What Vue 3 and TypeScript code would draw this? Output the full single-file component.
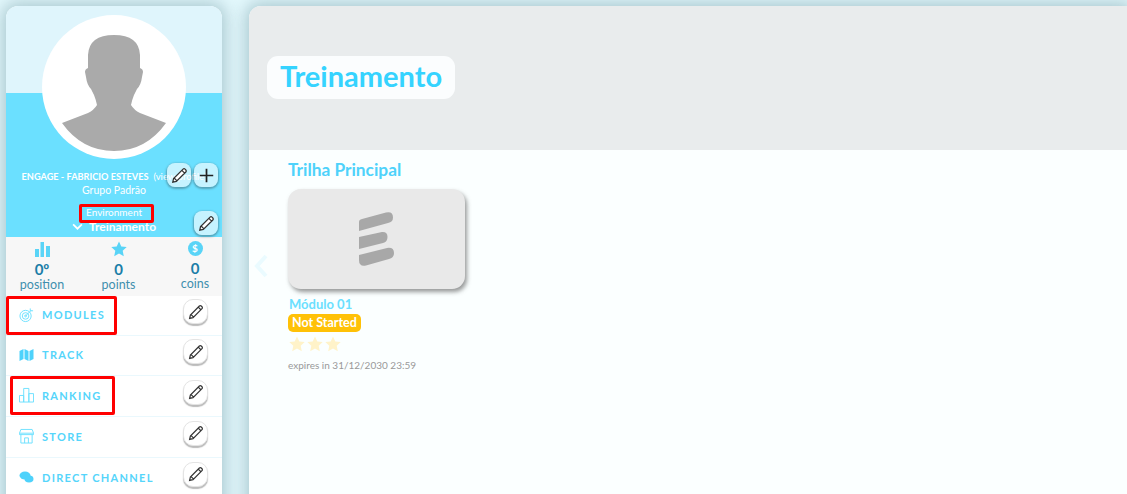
<script setup lang="ts">
const stats = [
  { value: '0º', label: 'position', icon: 'bars' },
  { value: '0', label: 'points', icon: 'star' },
  { value: '0', label: 'coins', icon: 'coin' },
];

const menu = [
  { label: 'MODULES', icon: 'target', height: 40 },
  { label: 'TRACK', icon: 'map', height: 40 },
  { label: 'RANKING', icon: 'rank', height: 41 },
  { label: 'STORE', icon: 'store', height: 41 },
  { label: 'DIRECT CHANNEL', icon: 'chat', height: 41 },
];

const pencil = 'M3.500 20.500l1-4.500L16.500 4c.7-.7 1.800-.7 2.500 0l1 1c.7.7.7 1.800 0 2.500L8 19.500l-4.500 1zM5.500 15.500l3 3M15 5.500l3.500 3.500';
</script>

<template>
  <div class="page">
    <aside class="sidebar">
      <section class="hero">
        <div class="avatar">
          <svg viewBox="0 0 144 144" width="144" height="144">
            <path class="silhouette" d="M20 108L46 98Q52 95 55 90Q54 85 52 80L49 74Q45 70 44 62L43 57Q43 54 46 53L46 40Q47 20 72 20Q97 20 98 40L98 53Q101 54 101 57L100 62Q99 70 95 74L92 80Q90 85 89 90Q92 95 98 98L124 108Q104 136 72 136Q40 136 20 108z" />
          </svg>
        </div>
        <p class="name"><b>ENGAGE - FABRICIO ESTEVES</b>&nbsp; (view profile)</p>
        <p class="group">Grupo Padrão</p>
        <div class="env">
          <span class="env-label">Environment</span>
          <span class="env-value">
            <svg viewBox="0 0 12 8" width="11" height="7"><path d="M1 1.500l5 5 5-5" /></svg>
            Treinamento
          </span>
        </div>

        <div class="hero-actions">
          <button class="hero-btn">
            <svg viewBox="0 0 24 24" width="19" height="19"><path class="pencil" :d="pencil" /></svg>
          </button>
          <button class="hero-btn">
            <svg viewBox="0 0 24 24" width="19" height="19"><path class="plus" d="M12 3.500v17M3.500 12h17" /></svg>
          </button>
        </div>
        <button class="hero-btn env-edit">
          <svg viewBox="0 0 24 24" width="19" height="19"><path class="pencil" :d="pencil" /></svg>
        </button>
      </section>

      <section class="stats">
        <div v-for="s in stats" :key="s.label" class="stat">
          <svg v-if="s.icon === 'bars'" viewBox="0 0 16 16" width="16" height="16">
            <path class="fill" d="M1 8h4v8H1zM6.500 1h3.500v15H6.500zM12 5h4v11h-4z" />
          </svg>
          <svg v-else-if="s.icon === 'star'" viewBox="0 0 16 16" width="16" height="16">
            <path class="fill" d="M8 .5l2.300 5 5.400.6-4 3.700 1.100 5.400L8 12.500l-4.800 2.700 1.100-5.400-4-3.700 5.400-.6z" />
          </svg>
          <span v-else class="coin">$</span>
          <strong>{{ s.value }}</strong>
          <span class="stat-label">{{ s.label }}</span>
        </div>
      </section>

      <nav class="menu">
        <div
          v-for="item in menu"
          :key="item.label"
          class="menu-row"
          :style="{ height: item.height + 'px' }"
        >
          <span class="menu-link">
            <svg v-if="item.icon === 'target'" viewBox="0 0 16 16" width="16" height="16" class="line">
              <circle cx="7" cy="9" r="6" /><circle cx="7" cy="9" r="3.500" /><circle cx="7" cy="9" r="1" />
              <path d="M7 9l6-6M12 1v2.500h3" />
            </svg>
            <svg v-else-if="item.icon === 'map'" viewBox="0 0 14 12" width="14" height="12">
              <path class="fill" d="M0 2l4-2v10l-4 2zM5 0l4 2v10l-4-2zM10 2l4-2v10l-4 2z" />
            </svg>
            <svg v-else-if="item.icon === 'rank'" viewBox="0 0 16 16" width="16" height="16" class="line">
              <path d="M.5 15.500v-7h4.500v7M5 15.500V1h5.500v14.500M10.500 15.500v-9h5v9" />
              <path d="M.500 15.500h15" />
            </svg>
            <svg v-else-if="item.icon === 'store'" viewBox="0 0 16 16" width="16" height="16" class="line">
              <path d="M2 1h12l1.500 4h-15zM.5 5v1.500h15V5M2 6.500v9h12v-9M6 15.500V10h4v5.500" />
            </svg>
            <svg v-else viewBox="0 0 14 12" width="14" height="12">
              <ellipse class="fill" cx="5.500" cy="4.500" rx="5.500" ry="4" />
              <ellipse class="fill" cx="9.500" cy="8" rx="4.500" ry="3.400" />
            </svg>
            <span class="menu-text">{{ item.label }}</span>
          </span>
          <button class="row-btn">
            <svg viewBox="0 0 24 24" width="18" height="18"><path class="pencil" :d="pencil" /></svg>
          </button>
        </div>
      </nav>

      <span class="mark mark-env"></span>
      <span class="mark mark-modules"></span>
      <span class="mark mark-ranking"></span>
    </aside>

    <main class="content">
      <header class="banner">
        <h1>Treinamento</h1>
      </header>

      <section class="track">
        <svg class="prev" viewBox="0 0 14 24" width="14" height="24"><path d="M12 2L3 12l9 10" /></svg>
        <h2>Trilha Principal</h2>
        <article class="module">
          <div class="thumb">
            <svg viewBox="0 0 35 55" width="35" height="55">
              <path class="logo" d="M0 10Q0 7.500 3 7L27 .5Q34 -1 34 5.500Q34 10 29 11L0 19zM0 25L23 20Q28.500 19.500 28.500 25Q28.500 30 24 31L0 37zM0 43L28 36Q35 35 35 41Q35 46 30 47L7 53.500Q0 55 0 48z" />
            </svg>
          </div>
          <h3>Módulo 01</h3>
          <span class="status">Not Started</span>
          <div class="stars">
            <svg v-for="n in 3" :key="n" viewBox="0 0 16 16" width="16" height="16">
              <path d="M8 .5l2.300 5 5.400.6-4 3.700 1.100 5.400L8 12.500l-4.800 2.700 1.100-5.400-4-3.700 5.400-.6z" />
            </svg>
          </div>
          <p class="expires">expires in 31/12/2030 23:59</p>
        </article>
      </section>
    </main>
  </div>
</template>

<style scoped>
.page {
  display: flex;
  gap: 27px;
  height: 494px;
  padding: 6px 0 0 6px;
  box-sizing: border-box;
  overflow: hidden;
  background: #e3f8fc;
  font-family: Lato, "Open Sans", sans-serif;
}

.sidebar {
  position: relative;
  flex: 0 0 216px;
  height: 560px;
  border-radius: 12px 12px 0 0;
  background: #fff;
  box-shadow: 0 0 16px 4px rgba(60, 110, 125, 0.32);
}

.hero {
  position: relative;
  height: 231px;
  padding-top: 9px;
  box-sizing: border-box;
  border-radius: 12px 12px 0 0;
  background: linear-gradient(#dff5fc 87px, #6be0ff 87px);
  color: #fff;
  text-align: center;
}

.avatar {
  width: 144px;
  height: 144px;
  margin: 0 auto;
  border-radius: 50%;
  background: #fff;
}

.avatar svg {
  display: block;
}

.silhouette {
  fill: #aaaaaa;
}

.name {
  margin: 11px 0 0;
  font-size: 9.500px;
  line-height: 13px;
  white-space: nowrap;
}

.name b {
  font-size: 9.200px;
  font-weight: 700;
}

.group {
  margin: 1px 0 0;
  font-size: 10.500px;
  line-height: 13px;
}

.env {
  display: flex;
  flex-direction: column;
  align-items: center;
  margin-top: 9px;
}

.env-label {
  font-size: 10px;
  line-height: 13px;
}

.env-value {
  display: flex;
  align-items: center;
  gap: 6px;
  font-size: 12px;
  font-weight: 700;
  line-height: 15px;
}

.env-value svg path {
  fill: none;
  stroke: #fff;
  stroke-width: 2;
}

.hero-actions {
  position: absolute;
  top: 157px;
  right: 4px;
  display: flex;
  gap: 3px;
}

.hero-btn {
  display: flex;
  align-items: center;
  justify-content: center;
  width: 24px;
  height: 24px;
  padding: 0;
  border: 0;
  border-radius: 8px;
  background: rgba(255, 255, 255, 0.62);
  box-shadow: 0 1px 2px 1px rgba(60, 90, 100, 0.45);
}

.env-edit {
  position: absolute;
  top: 205px;
  right: 4px;
}

.pencil {
  fill: #fff;
  stroke: #333;
  stroke-width: 1.600;
}

.plus {
  fill: none;
  stroke: #222;
  stroke-width: 2.200;
}

.stats {
  display: flex;
  justify-content: space-between;
  height: 59px;
  padding: 0 2px 0 11px;
  box-sizing: border-box;
  background: #f7f7f7;
}

.stat {
  flex: 0 0 50px;
  display: flex;
  flex-direction: column;
  align-items: center;
  padding-top: 4px;
  box-sizing: border-box;
  color: #1b7ea8;
}

.stat svg {
  display: block;
  height: 16px;
}

.stat .fill {
  fill: #59d4f7;
}

.coin {
  width: 15px;
  height: 15px;
  border-radius: 50%;
  background: #59d4f7;
  color: #fff;
  font-size: 10px;
  font-weight: 700;
  line-height: 15px;
  text-align: center;
}

.stat strong {
  margin-top: 3px;
  font-size: 15px;
  font-weight: 700;
  line-height: 18px;
}

.stat-label {
  font-size: 12.500px;
  line-height: 14px;
  color: #3f8fae;
}

.menu-row {
  display: flex;
  align-items: center;
  justify-content: space-between;
  padding: 0 14px 2px 13px;
  box-sizing: border-box;
  border-bottom: 1px solid #eaf8fd;
}

.menu-link {
  display: flex;
  align-items: center;
  gap: 8px;
}

.menu-link svg {
  flex: 0 0 auto;
  width: 15px;
}

.menu-link .fill {
  fill: #4ed2fb;
}

.line {
  fill: none;
  stroke: #6be0ff;
  stroke-width: 1;
}

.menu-text {
  color: #55d5fb;
  font-size: 11px;
  font-weight: 700;
  letter-spacing: 1.300px;
}

.row-btn {
  display: flex;
  align-items: center;
  justify-content: center;
  width: 25px;
  height: 25px;
  margin-bottom: 6px;
  padding: 0;
  border: 1px solid #e4e4e4;
  border-radius: 10px;
  background: #fff;
  box-shadow: 0 2px 1px rgba(120, 120, 120, 0.5);
}

.mark {
  position: absolute;
  border: 3px solid #ff0000;
  border-radius: 2px;
  box-sizing: border-box;
}

.mark-env {
  left: 73px;
  top: 198px;
  width: 75px;
  height: 19px;
}

.mark-modules {
  left: 0;
  top: 290px;
  width: 111px;
  height: 39px;
}

.mark-ranking {
  left: 4px;
  top: 370px;
  width: 105px;
  height: 39px;
}

.content {
  flex: 1;
  min-width: 0;
  height: 560px;
  border-radius: 12px 0 0 0;
  background: #fbffff;
  box-shadow: 0 0 16px 4px rgba(60, 110, 125, 0.32);
}

.banner {
  display: flex;
  align-items: center;
  height: 144px;
  padding: 0 18px 1px;
  box-sizing: border-box;
  border-radius: 12px 0 0 0;
  background: #e9eced;
}

.banner h1 {
  margin: 0;
  padding: 0 13px;
  height: 43px;
  border-radius: 11px;
  background: #fbfdfe;
  color: #35d3ff;
  font-size: 29px;
  font-weight: 700;
  line-height: 40px;
}

.track {
  position: relative;
  padding: 10px 0 0 39px;
}

.prev {
  position: absolute;
  left: 5px;
  top: 104px;
}

.prev path {
  fill: none;
  stroke: #eafbff;
  stroke-width: 4;
}

.track h2 {
  margin: 0 0 9px;
  color: #4ed2fb;
  font-size: 17.300px;
  font-weight: 700;
  line-height: 20px;
}

.module {
  width: 177px;
}

.thumb {
  display: flex;
  align-items: center;
  justify-content: center;
  width: 177px;
  height: 100px;
  border-radius: 13px;
  background: #e9e9e9;
  box-shadow: 2px 3px 4px rgba(70, 70, 70, 0.55);
}

.logo {
  fill: #a8a8a8;
}

.module h3 {
  margin: 7px 0 2px;
  color: #6be0ff;
  font-size: 13px;
  font-weight: 700;
  line-height: 16px;
  padding-left: 1px;
}

.status {
  display: block;
  width: fit-content;
  padding: 0 4px;
  height: 18px;
  border-radius: 5px;
  background: #ffc107;
  color: #fff;
  font-size: 12.500px;
  font-weight: 700;
  line-height: 18px;
}

.stars {
  display: flex;
  gap: 2px;
  margin: 4px 0 0 1px;
}

.stars path {
  fill: #fff3c9;
}

.expires {
  margin: 7px 0 0;
  color: #999;
  font-size: 10px;
  line-height: 12px;
  white-space: nowrap;
}
</style>

<style>
html, body {
  margin: 0;
  overflow: hidden;
}
</style>
